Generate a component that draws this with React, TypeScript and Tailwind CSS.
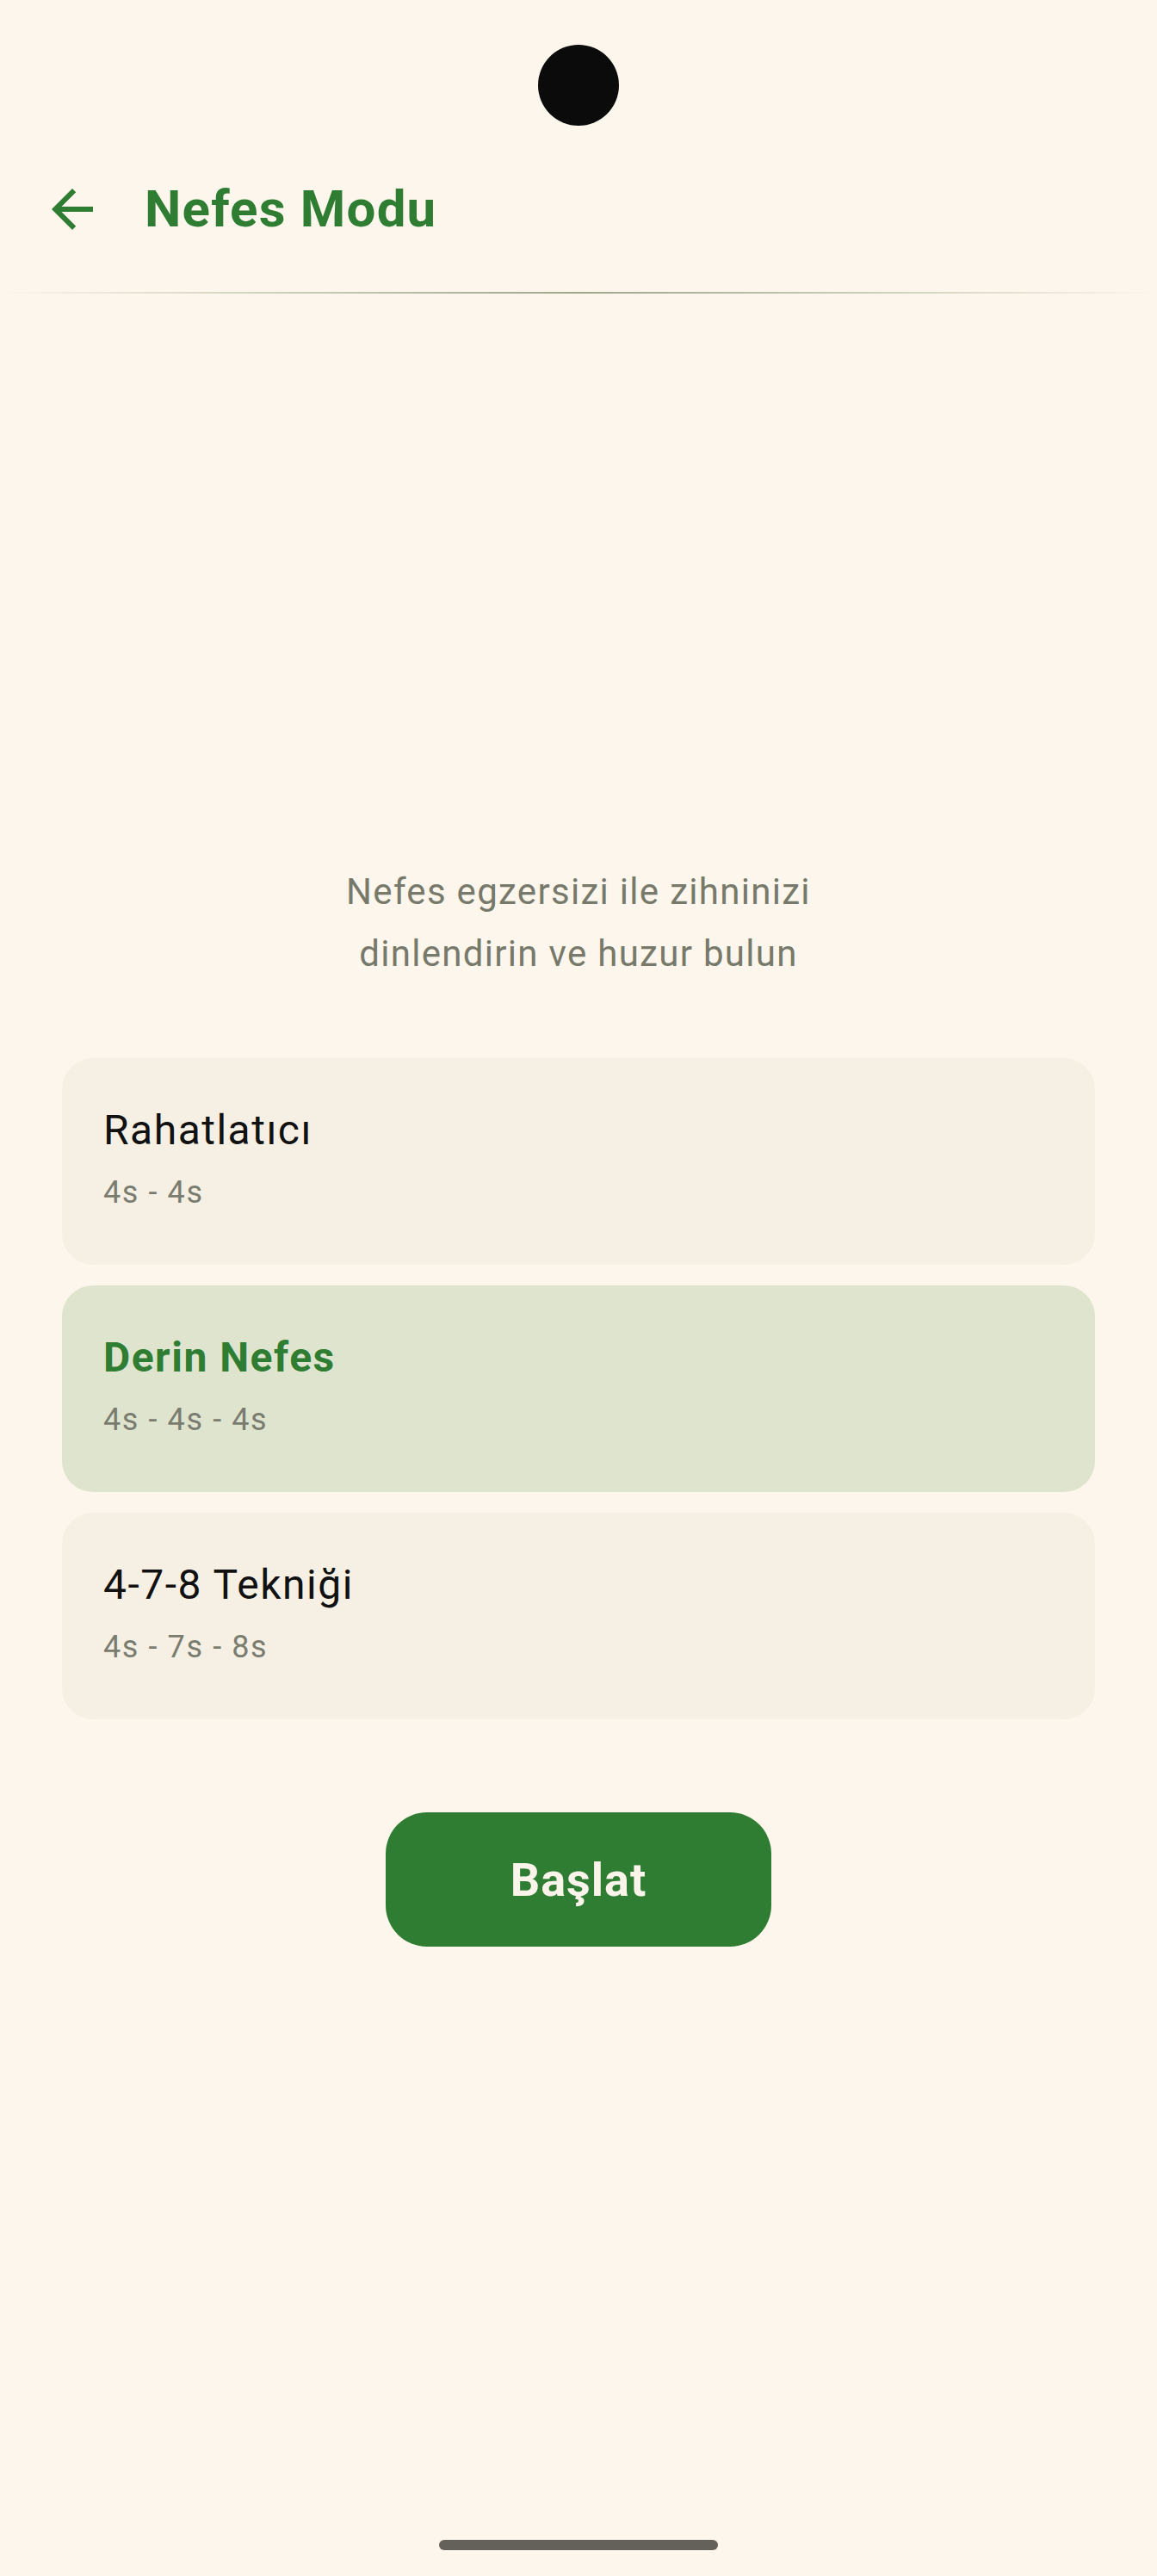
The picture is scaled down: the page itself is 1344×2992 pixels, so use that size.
import React from "react";

type Mode = { name: string; pattern: string; selected?: boolean };

const modes: Mode[] = [
  { name: "Rahatlatıcı", pattern: "4s - 4s" },
  { name: "Derin Nefes", pattern: "4s - 4s - 4s", selected: true },
  { name: "4-7-8 Tekniği", pattern: "4s - 7s - 8s" },
];

function BackArrow() {
  return (
    <svg width="72" height="72" viewBox="0 0 24 24" aria-hidden="true">
      <path
        fill="#2E7D32"
        d="M20 11H7.83l5.59-5.59L12 4l-8 8 8 8 1.41-1.41L7.83 13H20v-2z"
      />
    </svg>
  );
}

export default function App() {
  return (
    <div className="w-[1344px] h-[2992px] bg-[#FDF6EC] font-[Roboto,'Noto_Sans',sans-serif] flex flex-col">
      {/* status bar with camera cutout */}
      <div className="h-[147px] flex justify-center">
        <div className="mt-[52px] w-[94px] h-[94px] rounded-full bg-[#0B0B0B]" />
      </div>

      {/* top app bar */}
      <div className="h-[192px] flex items-center pl-[48px]">
        <div className="w-[72px] h-[72px] flex items-center justify-center">
          <BackArrow />
        </div>
        <h1 className="ml-[48px] text-[60px] leading-[72px] tracking-[1.2px] font-bold text-[#2E7D32]">
          Nefes Modu
        </h1>
      </div>

      {/* gradient divider */}
      <div className="h-[2px] bg-linear-to-r from-[#FDF6EC] via-[#9DA68B] to-[#FDF6EC]" />

      {/* subtitle */}
      <p className="mt-[659px] text-center text-[42px] leading-[72px] tracking-[1.3px] text-[#77796B]">
        Nefes egzersizi ile zihninizi
        <br />
        dinlendirin ve huzur bulun
      </p>

      {/* modes */}
      <div className="mt-[85px] px-[72px] flex flex-col gap-[24px]">
        {modes.map((m) => (
          <div
            key={m.name}
            className={
              m.selected
                ? "h-[240px] rounded-[36px] bg-[#DFE4CF] pl-[48px] pt-[48px]"
                : "h-[240px] rounded-[36px] bg-[#F6F0E4] pl-[48px] pt-[48px]"
            }
          >
            <div
              className={
                m.selected
                  ? "text-[48px] leading-[72px] tracking-[1.5px] font-bold text-[#2E7D32]"
                  : "text-[48px] leading-[72px] tracking-[1.5px] text-[#111111]"
              }
            >
              {m.name}
            </div>
            <div className="mt-[12px] text-[36px] leading-[48px] tracking-[1.6px] text-[#7A7C70]">
              {m.pattern}
            </div>
          </div>
        ))}
      </div>

      {/* start button */}
      <div className="mt-[108px] flex justify-center">
        <button className="w-[448px] h-[156px] rounded-[48px] bg-[#2E7D32] text-[#FBF4EA] text-[54px] tracking-[1px] font-bold flex items-center justify-center">
          Başlat
        </button>
      </div>

      <div className="flex-1" />

      {/* gesture bar */}
      <div className="h-[42px] flex justify-center">
        <div className="w-[324px] h-[12px] rounded-full bg-[#64615A]" />
      </div>
    </div>
  );
}
